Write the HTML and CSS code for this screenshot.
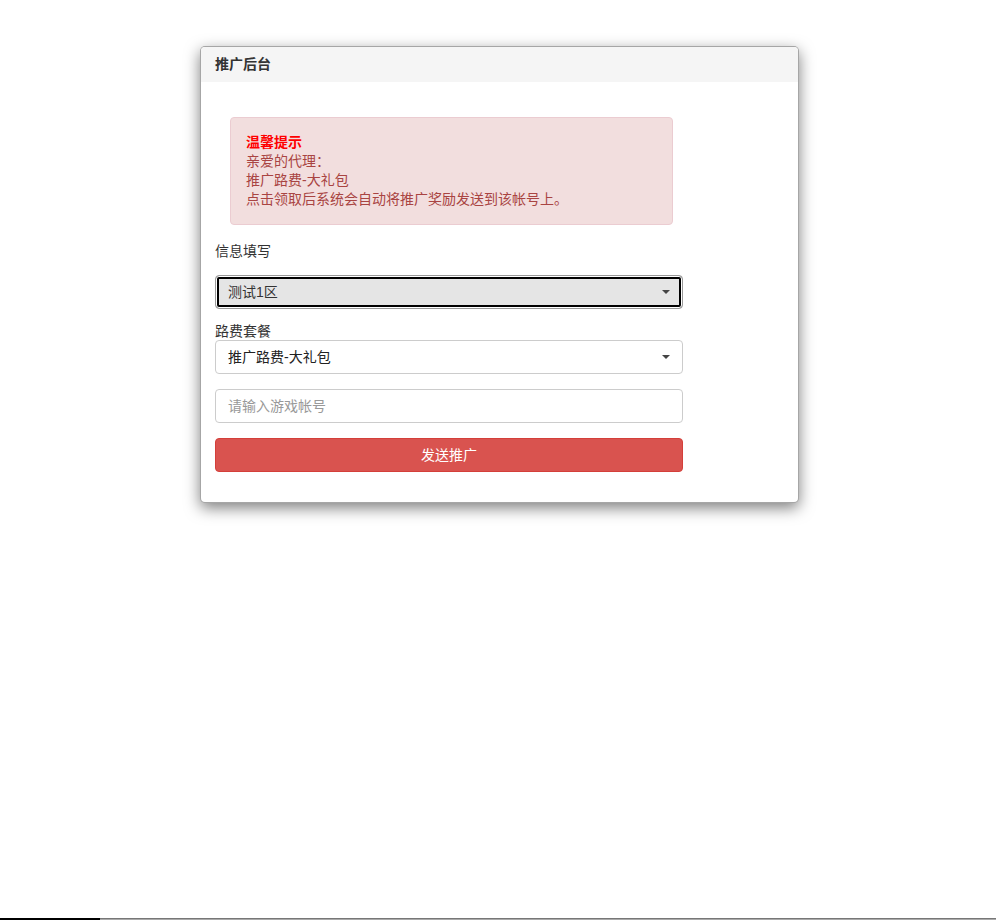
FILE: index.html
```html
<!DOCTYPE html>
<html lang="zh-CN">
<head>
<meta charset="utf-8">
<title>推广后台</title>
<link rel="stylesheet" href="styles.css">
</head>
<body>
<div class="page">
  <div class="panel">
    <div class="panel-heading">推广后台</div>
    <div class="panel-body">
      <div class="alert">
        <div class="alert-title">温馨提示</div>
        <div>亲爱的代理：</div>
        <div>推广路费-大礼包</div>
        <div>点击领取后系统会自动将推广奖励发送到该帐号上。</div>
      </div>
      <div class="label label-first">信息填写</div>
      <div class="select select-focus">
        <span>测试1区</span>
        <svg class="caret" width="8" height="4" viewBox="0 0 8 4"><path d="M0 0H8L4 4Z" fill="#444"/></svg>
      </div>
      <div class="label label-second">路费套餐</div>
      <div class="select">
        <span>推广路费-大礼包</span>
        <svg class="caret" width="8" height="4" viewBox="0 0 8 4"><path d="M0 0H8L4 4Z" fill="#444"/></svg>
      </div>
      <div class="input"><span class="placeholder">请输入游戏帐号</span></div>
      <div class="btn">发送推广</div>
    </div>
  </div>
  <div class="bottom-bar"><div class="bar-thumb"></div><div class="bar-track"></div></div>
</div>
</body>
</html>
```
FILE: styles.css
```css
* { box-sizing: border-box; }
html, body { margin: 0; padding: 0; background: #fff; }
body {
  font-family: "Liberation Sans", "Noto Sans CJK SC", Arial, sans-serif;
  font-size: 14px;
  color: #333;
  line-height: 20px;
}
.page {
  min-height: 920px;
  display: flex;
  flex-direction: column;
  align-items: flex-start;
}
.panel {
  margin: 46px 0 0 200px;
  width: 599px;
  border: 1px solid rgba(0,0,0,.35);
  border-radius: 5px;
  box-shadow: 0 5px 15px rgba(0,0,0,.5);
  background: #fff;
  overflow: hidden;
}
.panel-heading {
  background: #f5f5f5;
  padding: 7px 14px 8px;
  font-weight: bold;
  font-size: 14px;
  line-height: 20px;
  color: #333;
}
.panel-body {
  padding: 35px 115px 30px 14px;
  display: flex;
  flex-direction: column;
}
.alert {
  margin: 0 10px 16px 15px;
  padding: 15px 15px;
  background: #f2dede;
  border: 1px solid #ebccd1;
  border-radius: 4px;
  color: #a94442;
  font-size: 14px;
  line-height: 19px;
}
.alert-title {
  color: #f00;
  font-weight: bold;
  font-size: 14px;
}
.label {
  font-size: 14px;
  color: #333;
}
.label-first { margin-bottom: 14px; line-height: 20px; }
.label-second { margin-top: 13px; line-height: 18px; }
.select {
  height: 34px;
  border: 1px solid #ccc;
  border-radius: 4px;
  padding: 0 12px;
  display: flex;
  align-items: center;
  justify-content: space-between;
  color: #222;
  font-size: 14px;
  background: #fff;
}
.select-focus {
  background: #e5e5e5;
  border-color: #999;
  box-shadow: inset 0 0 0 1px #fff, inset 0 0 0 3px #000;
  color: #333;
}
.caret { flex: none; margin-right: 0; }
.input {
  margin-top: 15px;
  height: 34px;
  border: 1px solid #ccc;
  border-radius: 4px;
  padding: 0 12px;
  display: flex;
  align-items: center;
}
.placeholder { color: #999; font-size: 14px; }
.btn {
  margin-top: 15px;
  height: 34px;
  background: #d9534f;
  border: 1px solid #d43f3a;
  border-radius: 4px;
  color: #fff;
  display: flex;
  align-items: center;
  justify-content: center;
  font-size: 14px;
}
.bottom-bar {
  margin-top: auto;
  width: 100%;
  height: 2px;
  display: flex;
}
.bar-thumb { width: 100px; background: #000; }
.bar-track { flex: 1; background: linear-gradient(#777 0 50%, #aaa 50% 100%); }
```
